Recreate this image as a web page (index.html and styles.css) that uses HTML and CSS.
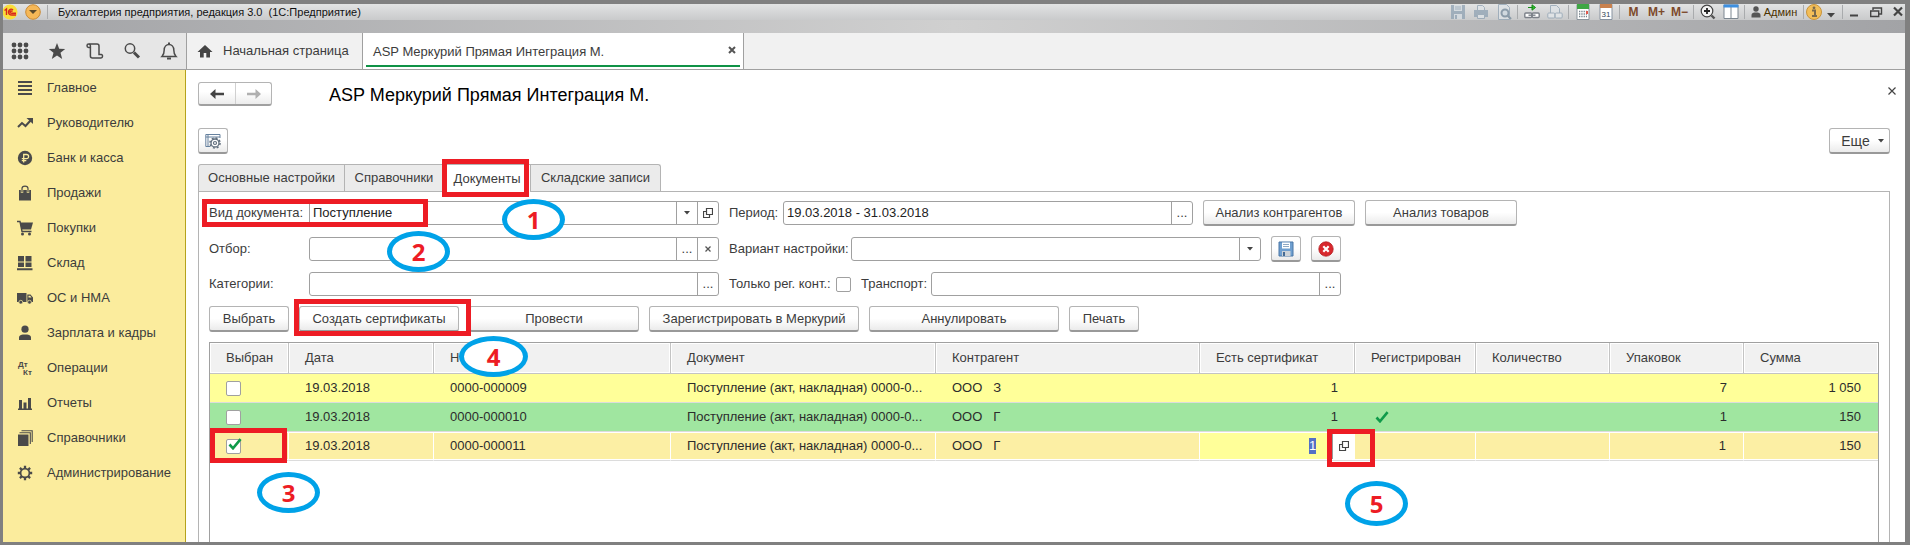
FILE: index.html
```html
<!DOCTYPE html>
<html lang="ru">
<head>
<meta charset="utf-8">
<title>Бухгалтерия предприятия, редакция 3.0 (1С:Предприятие)</title>
<link rel="stylesheet" href="styles.css">
</head>
<body>
<svg class="defs" width="0" height="0" aria-hidden="true">
  <symbol id="i-open" viewBox="0 0 10 10"><path d="M3.5 .5h6v6h-6zM3 3.5H.5v6h6V7" fill="none" stroke="#444" stroke-width="1.2"/></symbol>
  <symbol id="i-caret" viewBox="0 0 6 4"><path d="M0 0h6L3 3.5z" fill="#444"/></symbol>
  <symbol id="i-check" viewBox="0 0 14 12"><path d="M1.5 6.5 5 10.3 12.6 1.2" fill="none" stroke="#0f9a4a" stroke-width="2.6"/></symbol>
</svg>
<div class="frame">
  <header class="titlebar">
    <svg class="logo" viewBox="0 0 16 16"><circle cx="7" cy="8" r="7.5" fill="#f9de3a"/><path d="M1.5 6.5 3.5 5v6M10 6.2C8.500 4.200 5.500 5.200 5.500 8s2 3 3.500 3h4M9.500 7.500C8 6.500 7 7 7 8s.8 1.300 2 1.300h4" fill="none" stroke="#d9261c" stroke-width="1.4"/></svg>
    <button class="menu-btn" aria-label="Главное меню"><svg viewBox="0 0 16 16"><circle cx="8" cy="8" r="7.300" fill="#f6b857" stroke="#c98a35"/><path d="M4 6h8l-4 4z" fill="#5b4a2b"/></svg></button>
    <i class="sep sep-wide"></i>
    <span class="app-title">Бухгалтерия предприятия, редакция 3.0&nbsp; (1С:Предприятие)</span>
    <div class="tools">
      <button class="tool faded" aria-label="Сохранить"><svg viewBox="0 0 16 16"><path d="M1 1h14v14H1z" fill="#8fa2b3"/><path d="M4 1h8v6H4zM4 10h8v5H4z" fill="#d5dce2"/><path d="M5 3h6M5 5h6" stroke="#8fa2b3"/><path d="M5 11h2v4H5z" fill="#8fa2b3"/></svg></button>
      <button class="tool faded" aria-label="Печать"><svg viewBox="0 0 16 16"><path d="M1 6h14v7H1z" fill="#8fa2b3"/><path d="M4.500 6V1.500h5l2 2V6M4.500 10.500h7v4h-7z" fill="#dfe4e8" stroke="#8fa2b3"/></svg></button>
      <button class="tool faded" aria-label="Просмотр"><svg viewBox="0 0 16 16"><path d="M2.500.5h8l3 3v12h-11z" fill="#dfe4e8" stroke="#8fa2b3"/><circle cx="9" cy="9" r="3.500" fill="#cfdae2" stroke="#74899b" stroke-width="2"/><path d="m11.500 11.500 3.500 3.500" stroke="#74899b" stroke-width="2.200"/></svg></button>
      <i class="sep"></i>
      <button class="tool" aria-label="Получить ссылку"><svg viewBox="0 0 16 16"><path d="M4 3.500h5M8 .8l3.500 2.700L8 6.200z" fill="#2fc12f" stroke="#168a16"/><rect x=".8" y="9" width="7" height="4.500" rx="1" fill="#fff" stroke="#7b8088" stroke-width="1.400"/><rect x="8.200" y="9" width="7" height="4.500" rx="1" fill="#fff" stroke="#7b8088" stroke-width="1.400"/><path d="M4.500 11.200h7" stroke="#7b8088" stroke-width="1.400"/></svg></button>
      <button class="tool faded" aria-label="Перейти по ссылке"><svg viewBox="0 0 16 16"><path d="M3.500 9V1.500h6l3 3V9" fill="#dfe4e8" stroke="#8fa2b3"/><rect x=".8" y="9" width="7" height="5" rx="1" fill="#e5e9ec" stroke="#8fa2b3"/><rect x="8.200" y="9" width="7" height="5" rx="1" fill="#e5e9ec" stroke="#8fa2b3"/></svg></button>
      <i class="sep"></i>
      <button class="tool" aria-label="Калькулятор"><svg viewBox="0 0 16 16"><path d="M2 .5h12v15H2z" fill="#fff" stroke="#8a949c"/><path d="M2 0h12v5H2z" fill="#3fa744"/><path d="M4 7.500h8M4 10h8M4 12.500h8" stroke="#76828c" stroke-width="1.300" stroke-dasharray="1.300 1"/><path d="M11 7h2v3h-2z" fill="#e2574c"/></svg></button>
      <button class="tool" aria-label="Календарь"><svg viewBox="0 0 16 16"><path d="M2 .5h12v15H2z" fill="#fff" stroke="#8893a0"/><path d="M2 0h12v4H2z" fill="#c9814e"/><text x="8" y="12.500" text-anchor="middle" class="cal-num">31</text></svg></button>
      <i class="sep"></i>
      <button class="tool mem">M</button><button class="tool mem">M+</button><button class="tool mem">M−</button>
      <i class="sep"></i>
      <button class="tool" aria-label="Масштаб"><svg viewBox="0 0 16 16"><circle cx="7" cy="7" r="5.800" fill="#f4f4f4" stroke="#444" stroke-width="1.200"/><path d="M4 7h6M7 4v6" stroke="#222" stroke-width="1.800"/><path d="m11.500 11.500 3 3" stroke="#555" stroke-width="2.400"/></svg></button>
      <button class="tool" aria-label="Панели"><svg viewBox="0 0 16 16"><path d="M1 1h14v13.500H1z" fill="#fff" stroke="#7c8791"/><path d="M.5.5h15v3H.5z" fill="#3d8fe0"/><path d="M8 3v11" stroke="#7c8791"/></svg></button>
      <i class="sep"></i>
      <button class="user"><svg viewBox="0 0 10 12"><circle cx="5" cy="3" r="2.700" fill="#555"/><path d="M.5 11.500V9c0-2 2-2.500 4.500-2.500S9.500 7 9.500 9v2.500z" fill="#555"/></svg>Админ</button>
      <i class="sep"></i>
      <button class="info" aria-label="Справка"><svg viewBox="0 0 16 16"><circle cx="8" cy="8" r="7.500" fill="#f3be58" stroke="#c8933a"/><path d="M6 6.500h3v5M6 12h5" fill="none" stroke="#7a6a4c" stroke-width="2"/><circle cx="8" cy="3.800" r="1.400" fill="#7a6a4c"/></svg></button>
      <button class="more" aria-label="Еще"><svg viewBox="0 0 8 5"><path d="M0 0h8L4 4.500z" fill="#444"/></svg></button>
      <i class="sep"></i>
      <div class="win">
        <button aria-label="Свернуть"><svg viewBox="0 0 14 14"><path d="M3 10.500h8" stroke="#444" stroke-width="2"/></svg></button>
        <button aria-label="Восстановить"><svg viewBox="0 0 14 14"><path d="M4 5V3h8.500v6H10" fill="none" stroke="#444" stroke-width="1.400"/><path d="M1.700 6h8v5.500h-8z" fill="none" stroke="#444" stroke-width="1.400"/></svg></button>
        <button aria-label="Закрыть"><svg viewBox="0 0 14 14"><path d="m3 2.500 8 8M11 2.500l-8 8" stroke="#444" stroke-width="2.200"/></svg></button>
      </div>
    </div>
  </header>

  <div class="tabbar">
    <div class="quick">
      <button aria-label="Меню функций"><svg viewBox="0 0 18 18" fill="#4a4a4a"><circle cx="3" cy="3" r="2.400"/><circle cx="9" cy="3" r="2.400"/><circle cx="15" cy="3" r="2.400"/><circle cx="3" cy="9" r="2.400"/><circle cx="9" cy="9" r="2.400"/><circle cx="15" cy="9" r="2.400"/><circle cx="3" cy="15" r="2.400"/><circle cx="9" cy="15" r="2.400"/><circle cx="15" cy="15" r="2.400"/></svg></button>
      <button aria-label="Избранное"><svg viewBox="0 0 18 18"><path d="m9 1 2.200 5.800 6 .3-4.700 3.700 1.700 6.200L9 13.500 3.800 17l1.700-6.200L.8 7.100l6-.3z" fill="#4a4a4a"/></svg></button>
      <button aria-label="История"><svg viewBox="0 0 18 18"><path d="M4.500 5.500H2.700a1.700 1.700 0 1 1 1.700-1.700V14c0 1 .8 2 2 2H15c2 0 2-3.500.3-3.500H13V4c0-1.200-.8-2-2-2H3" fill="none" stroke="#4a4a4a" stroke-width="1.500"/></svg></button>
      <button aria-label="Поиск"><svg viewBox="0 0 18 18"><circle cx="7" cy="6.500" r="4.700" fill="none" stroke="#4a4a4a" stroke-width="1.500"/><path d="m11 10.500 5 5" stroke="#4a4a4a" stroke-width="3"/></svg></button>
      <button aria-label="Уведомления"><svg viewBox="0 0 18 18"><path d="M2 14.500c1.500-1.500 2.200-3 2.200-6.500S6.500 2.500 9 2.500 13.800 4.500 13.800 8s.7 5 2.200 6.500z" fill="none" stroke="#4a4a4a" stroke-width="1.500"/><path d="M9 .5v2M7 16.500h4" stroke="#4a4a4a" stroke-width="2"/></svg></button>
    </div>
    <nav class="tabs">
      <a class="home" href="#"><svg viewBox="0 0 16 14"><path d="M8 1 .5 8H3v5.500h3.700V9h2.600v4.500H13V8h2.500z" fill="#444"/></svg>Начальная страница</a>
      <div class="open-tab"><a href="#">ASP Меркурий Прямая Интеграция М.</a><button aria-label="Закрыть вкладку"><svg viewBox="0 0 8 8"><path d="m1 1 6 6M7 1 1 7" stroke="#555" stroke-width="2"/></svg></button></div>
    </nav>
  </div>

  <div class="body">
    <nav class="side">
      <a href="#"><svg viewBox="0 0 16 16"><path d="M1 2h14M1 6h14M1 10h14M1 14h14" stroke="#4a4a4a" stroke-width="2"/></svg>Главное</a>
      <a href="#"><svg viewBox="0 0 16 16"><path d="m1 12 4-4 3.500 3L14 5" fill="none" stroke="#4a4a4a" stroke-width="2"/><path d="M9.500 3H16v6z" fill="#4a4a4a"/></svg>Руководителю</a>
      <a href="#"><svg viewBox="0 0 16 16"><circle cx="8" cy="8" r="7.200" fill="#4a4a4a"/><path d="M6.700 12.500V4.500h2.800a2 2 0 0 1 0 4.200H4.800M4.800 10.700h4.500" fill="none" stroke="#fbec9d" stroke-width="1.300"/></svg>Банк и касса</a>
      <a href="#"><svg viewBox="0 0 16 16"><path d="M2 5h12v10.500H2z" fill="#4a4a4a"/><path d="M5 8V3.500C5 0 11 0 11 3.500V8" fill="none" stroke="#fbec9d" stroke-width="2.400"/><path d="M5 7.500v-4C5 .2 11 .2 11 3.500v4" fill="none" stroke="#4a4a4a" stroke-width="1.200"/></svg>Продажи</a>
      <a href="#"><svg viewBox="0 0 16 16"><path d="M3 2.500h13l-2 7H4.500z" fill="#4a4a4a"/><path d="M0 1.500h3l2 10h9.500" fill="none" stroke="#4a4a4a" stroke-width="1.400"/><circle cx="5.500" cy="14" r="1.500" fill="#4a4a4a"/><circle cx="12.500" cy="14" r="1.500" fill="#4a4a4a"/></svg>Покупки</a>
      <a href="#"><svg viewBox="0 0 16 16"><path d="M1 1h6v5.500H1zM8.500 1h6v5.500h-6zM1 7.500h6V12H1zM8.500 7.500h6V12h-6zM0 13.200h15.500v2H0z" fill="#4a4a4a"/></svg>Склад</a>
      <a href="#"><svg viewBox="0 0 16 16"><path d="M0 3h9.500v9H0zM10.300 4.500h3.200L16 7.500V12h-5.700z" fill="#4a4a4a"/><path d="M11.500 5.700h1.700l1.300 1.800h-3z" fill="#fbec9d"/><circle cx="3.800" cy="12.200" r="1.900" fill="#4a4a4a" stroke="#fbec9d" stroke-width=".7"/><circle cx="12.500" cy="12.200" r="1.900" fill="#4a4a4a" stroke="#fbec9d" stroke-width=".7"/></svg>ОС и НМА</a>
      <a href="#"><svg viewBox="0 0 16 16"><circle cx="8" cy="4.200" r="3.600" fill="#4a4a4a"/><path d="M2 15v-2.500C2 10 5 9.500 8 9.500s6 .5 6 3V15z" fill="#4a4a4a"/></svg>Зарплата и кадры</a>
      <a href="#"><svg viewBox="0 0 16 16" class="dtkt"><text x="1" y="7">Дт</text><text x="6" y="15">Кт</text></svg>Операции</a>
      <a href="#"><svg viewBox="0 0 16 16"><path d="M2 5h3v9H2zM6.500 7.500h3V14h-3zM11 3h3v11h-3zM1 13.500h14V15H1z" fill="#4a4a4a"/></svg>Отчеты</a>
      <a href="#"><svg viewBox="0 0 16 16"><path d="M1 4.500h10.500V16H1z" fill="#4a4a4a"/><path d="M2.500 2.700h10.800V14M4.500.8h10.700V12" fill="none" stroke="#4a4a4a" stroke-width="1.100"/></svg>Справочники</a>
      <a href="#"><svg viewBox="0 0 16 16"><circle cx="8" cy="8" r="4.400" fill="none" stroke="#4a4a4a" stroke-width="1.700"/><path d="M8 .8v2.600M8 12.600v2.600M.8 8h2.600M12.600 8h2.600M2.900 2.900l1.800 1.800M11.300 11.300l1.800 1.800M2.900 13.100l1.800-1.800M11.300 4.700l1.800-1.800" stroke="#4a4a4a" stroke-width="2.300"/></svg>Администрирование</a>
    </nav>

    <main class="main">
      <div class="head">
        <div class="nav-pair">
          <button aria-label="Назад"><svg viewBox="0 0 14 12"><path d="M0 6l5.500-5v3.700H14v2.600H5.500V11z" fill="#444"/></svg></button>
          <button aria-label="Вперед"><svg viewBox="0 0 14 12"><path d="M14 6 8.500 1v3.700H0v2.600h8.500V11z" fill="#b0b0b0"/></svg></button>
        </div>
        <h1>ASP Меркурий Прямая Интеграция М.</h1>
        <button class="close" aria-label="Закрыть"><svg viewBox="0 0 8 8"><path d="m.5.5 7 7M7.500.5l-7 7" stroke="#444" stroke-width="1.200"/></svg></button>
      </div>
      <div class="cmd">
        <button class="btn icon-btn" aria-label="Настройки"><svg viewBox="0 0 16 16"><path d="M15 5V1.500H.8v12H5M.8 4H15M3 1.500v12" fill="none" stroke="#66819e"/><circle cx="10" cy="10" r="4" fill="#fff" stroke="#5f6d7c" stroke-width="1.300"/><circle cx="10" cy="10" r="5.100" fill="none" stroke="#5f6d7c" stroke-width="1.400" stroke-dasharray="2 2"/><circle cx="10" cy="10" r="1.500" fill="none" stroke="#5f6d7c" stroke-width="1.200"/></svg></button>
        <button class="btn more-btn">Еще<svg class="caret"><use href="#i-caret"/></svg></button>
      </div>
      <div class="page-tabs" role="tablist">
        <button role="tab" class="t1">Основные настройки</button>
        <button role="tab" class="t2">Справочники</button>
        <button role="tab" class="t3" aria-selected="true">Документы</button>
        <button role="tab" class="t4">Складские записи</button>
      </div>
      <section class="panel">
        <div class="row">
          <label class="lab" for="kind">Вид документа:</label>
          <div class="field"><select id="kind"><option>Поступление</option></select><span class="seg"><svg class="caret"><use href="#i-caret"/></svg></span><button class="seg" aria-label="Открыть"><svg class="open"><use href="#i-open"/></svg></button></div>
          <label class="lab-period" for="period">Период:</label>
          <div class="field"><input id="period" value="19.03.2018 - 31.03.2018"><button class="seg">...</button></div>
          <button class="btn w152">Анализ контрагентов</button>
          <button class="btn w152">Анализ товаров</button>
        </div>
        <div class="row">
          <label class="lab" for="filter">Отбор:</label>
          <div class="field"><input id="filter"><button class="seg">...</button><button class="seg" aria-label="Очистить"><svg class="clear" viewBox="0 0 6 6"><path d="m.5.5 5 5M5.500.5l-5 5" stroke="#555" stroke-width="1.300"/></svg></button></div>
          <label class="lab-variant" for="variant">Вариант настройки:</label>
          <div class="field"><select id="variant"><option></option></select><span class="seg"><svg class="caret"><use href="#i-caret"/></svg></span></div>
          <button class="btn icon-btn" aria-label="Сохранить настройку"><svg viewBox="0 0 16 16"><path d="M1 1h14v14H1z" fill="#6f9fd0" stroke="#4a76a6"/><path d="M4 1.500h8v6H4z" fill="#fff"/><path d="M5 3.500h6M5 5.500h6" stroke="#8fa9c4"/><path d="M4 10h8.500v5H4z" fill="#ccd2d8"/><path d="M5 11h2v4H5z" fill="#446a94"/></svg></button>
          <button class="btn icon-btn" aria-label="Удалить настройку"><svg viewBox="0 0 16 16"><circle cx="8" cy="8" r="7.200" fill="#d8282d" stroke="#b41e22" stroke-width=".8"/><path d="m5.300 5.300 5.400 5.400M10.700 5.300l-5.400 5.400" stroke="#fff" stroke-width="2.200"/></svg></button>
        </div>
        <div class="row row-low">
          <label class="lab" for="cats">Категории:</label>
          <div class="field"><input id="cats"><button class="seg">...</button></div>
          <label class="lab-reg" for="reg">Только рег. конт.:</label>
          <input type="checkbox" class="chk" id="reg">
          <label class="lab-tr" for="transport">Транспорт:</label>
          <div class="field"><input id="transport"><button class="seg">...</button></div>
        </div>
        <div class="row">
          <button class="btn w80">Выбрать</button>
          <button class="btn w160">Создать сертификаты</button>
          <button class="btn w170">Провести</button>
          <button class="btn w210">Зарегистрировать в Меркурий</button>
          <button class="btn w190">Аннулировать</button>
          <button class="btn w70">Печать</button>
        </div>
        <div class="grid">
          <table>
            <colgroup><col class="c-sel"><col class="c-date"><col class="c-num"><col class="c-doc"><col><col class="c-cert"><col class="c-reg"><col class="c-qty"><col class="c-qty"><col class="c-sum"></colgroup>
            <thead><tr><th>Выбран</th><th>Дата</th><th>Номер</th><th>Документ</th><th>Контрагент</th><th>Есть сертификат</th><th>Регистрирован</th><th>Количество</th><th>Упаковок</th><th>Сумма</th></tr></thead>
            <tbody>
              <tr class="yellow"><td><input type="checkbox" class="chk" aria-label="Выбран"></td><td>19.03.2018</td><td>0000-000009</td><td>Поступление (акт, накладная) 0000-0...</td><td>ООО&nbsp;&nbsp; З</td><td class="num">1</td><td></td><td></td><td class="num">7</td><td class="num">1 050</td></tr>
              <tr class="green"><td><input type="checkbox" class="chk" aria-label="Выбран"></td><td>19.03.2018</td><td>0000-000010</td><td>Поступление (акт, накладная) 0000-0...</td><td>ООО&nbsp;&nbsp; Г</td><td class="num">1</td><td><svg class="tick"><use href="#i-check"/></svg></td><td></td><td class="num">1</td><td class="num">150</td></tr>
              <tr class="current"><td><span class="chk-wrap"><input type="checkbox" class="chk" checked aria-label="Выбран"><svg class="tick over"><use href="#i-check"/></svg></span></td><td>19.03.2018</td><td>0000-000011</td><td>Поступление (акт, накладная) 0000-0...</td><td>ООО&nbsp;&nbsp; Г</td><td class="edit"><div class="editor"><input value="1" aria-label="Есть сертификат"><button aria-label="Открыть"><svg class="open"><use href="#i-open"/></svg></button></div></td><td></td><td></td><td class="num">1</td><td class="num">150</td></tr>
            </tbody>
          </table>
        </div>
      </section>
    </main>
  </div>

  <div class="mark box b1"></div><div class="mark box b2"></div><div class="mark box b3"></div><div class="mark box b4"></div><div class="mark box b5"></div>
  <div class="mark step s1">1</div><div class="mark step s2">2</div><div class="mark step s3">3</div><div class="mark step s4">4</div><div class="mark step s5">5</div>
</div>
</body>
</html>
```
FILE: styles.css
```css
* { box-sizing: border-box; }
html, body { height: 100%; }
body { margin: 0; background: #808080; font: 13px/16px "Liberation Sans", Arial, sans-serif; color: #3c3c3c; overflow: hidden; }
button, input, select { font: inherit; color: inherit; margin: 0; }
button { border: 0; padding: 0; background: none; display: flex; align-items: center; justify-content: center; white-space: nowrap; }
a { color: inherit; text-decoration: none; white-space: nowrap; }
label { white-space: nowrap; }
svg { display: block; flex: none; }
.defs { position: absolute; }

.frame { position: relative; height: 100vh; border: solid #808080; border-width: 4px 5px 3px 3px; background: #fff; display: flex; flex-direction: column; }

/* Title bar */
.titlebar { flex: none; height: 29px; padding-bottom: 13px; display: flex; align-items: center; background: linear-gradient(#e2e3e3, #c9cacb) top / 100% 16px no-repeat, linear-gradient(90deg, #a2a3a6, #d0d0d0 50%, #a2a3a6); color: #111; font-size: 11px; overflow: hidden; }
.logo, .menu-btn svg, .tool svg, .info svg { width: 16px; height: 16px; }
.menu-btn { margin-left: 6px; }
.sep { flex: none; width: 1px; height: 14px; margin: 0 2px; background: #a9abad; }
.sep-wide { margin: 0 10px 0 6px; }
.tools { margin-left: auto; display: flex; align-items: center; height: 16px; }
.tool { width: 23px; height: 16px; }
.faded { opacity: .75; }
.mem { color: #7d4a2c; font-weight: bold; font-size: 12px; }
.cal-num { font-size: 8px; fill: #345; }
.user { width: 54px; gap: 3px; color: #4a3300; }
.user svg { width: 10px; height: 12px; }
.more { width: 18px; padding-top: 6px; }
.more svg { width: 8px; height: 5px; }
.win { display: flex; gap: 8px; margin-left: 2px; }
.win svg { width: 14px; height: 14px; }

/* Open windows bar */
.tabbar { flex: none; height: 37px; display: flex; background: #f1f1f1; border-bottom: 1px solid #a0a0a0; }
.quick { width: 184px; padding: 0 8px; background: #e6e6e6; border-right: 1px solid #a0a0a0; display: flex; align-items: center; justify-content: space-between; }
.quick svg { width: 18px; height: 18px; }
.tabs { display: flex; }
.home { width: 176px; padding-left: 10px; display: flex; align-items: center; gap: 10px; border-right: 1px solid #a0a0a0; }
.home svg { width: 16px; height: 14px; }
.open-tab { width: 381px; padding: 0 3px; background: #fff; border-right: 1px solid #a0a0a0; display: flex; }
.open-tab a { flex: 1; padding-left: 7px; line-height: 37px; }
.open-tab a, .open-tab button { height: 34px; border-bottom: 2px solid #0f9246; }
.open-tab button { padding: 2px 4px 0 0; }
.open-tab button svg { width: 8px; height: 8px; }

/* Sections */
.body { flex: 1; min-height: 0; display: flex; }
.side { flex: none; width: 183px; background: #fbec9d; border-right: 1px solid #b5a21c; }
.side a { height: 35px; padding-left: 14px; display: flex; align-items: center; gap: 14px; }
.side svg { width: 16px; height: 16px; }
.dtkt { font-size: 8px; font-weight: bold; fill: #4a4a4a; }

.main { flex: 1; min-width: 0; padding: 12px 15px 0 12px; display: flex; flex-direction: column; }
.head { height: 24px; display: flex; align-items: center; }
.nav-pair { display: flex; border: 1px solid #b4b4b4; border-bottom: 2px solid #a0a0a0; border-radius: 3px; background: linear-gradient(#fff 40%, #ececec); }
.nav-pair button { width: 36px; height: 21px; }
.nav-pair button + button { border-left: 1px solid #d0d0d0; }
.nav-pair svg { width: 14px; height: 12px; }
h1 { margin: 0 0 0 57px; padding-top: 2px; font-size: 18px; line-height: 24px; font-weight: normal; color: #000; white-space: nowrap; }
.close { margin-left: auto; height: 18px; align-self: flex-start; width: 8px; margin-right: -6px; }
.close svg { width: 8px; height: 8px; }
.cmd { margin: 22px 0 10px; display: flex; justify-content: space-between; }
.btn { flex: none; height: 26px; border: 1px solid #b4b4b4; border-bottom: 2px solid #999; border-radius: 3px; background: linear-gradient(#fff 50%, #ebebeb); }
.icon-btn { width: 30px; }
.icon-btn svg { width: 16px; height: 16px; }
.more-btn { width: 61px; gap: 8px; font-size: 14px; padding-left: 6px; }
.caret { width: 6px; height: 4px; }
.open { width: 10px; height: 10px; }
.clear { width: 6px; height: 6px; }

.page-tabs { display: flex; height: 27px; }
.page-tabs button { height: 27px; background: #ebebeb; border: 1px solid #b4b4b4; border-bottom: 0; border-left-width: 0; }
.page-tabs .t1 { width: 147px; border-left-width: 1px; border-top-left-radius: 3px; }
.page-tabs .t2 { width: 99px; }
.page-tabs .t3 { width: 87px; height: 28px; background: #fff; position: relative; }
.page-tabs .t4 { width: 130px; border-top-right-radius: 3px; }

.panel { flex: 1; min-height: 0; border: 1px solid #b4b4b4; border-bottom: 0; padding: 8px 10px 0; display: flex; flex-direction: column; gap: 10px; }
.row { flex: none; display: flex; align-items: center; gap: 10px; height: 26px; }
.row-low { height: 24px; }
.lab { width: 90px; }
.lab-period { width: 44px; }
.lab-variant { width: 112px; }
.lab-reg { width: 97px; }
.lab-tr { width: 60px; }
.field { flex: none; width: 410px; height: 24px; border: 1px solid #a0a0a0; border-radius: 3px; background: #fff; display: flex; }
.field input, .field select { flex: 1; min-width: 0; border: 0; padding: 0 0 0 3px; background: none; appearance: none; color: #222; outline: 0; }
.seg { flex: none; width: 21px; border-left: 1px solid #a0a0a0; display: flex; align-items: center; justify-content: center; }
.chk { appearance: none; flex: none; width: 15px; height: 15px; border: 1px solid #a0a0a0; border-radius: 2px; background: #fff; }
.w70 { width: 70px; } .w80 { width: 80px; } .w152 { width: 152px; } .w160 { width: 160px; }
.w170 { width: 170px; } .w190 { width: 190px; } .w210 { width: 210px; }

/* Documents list */
.grid { flex: 1; min-height: 0; border: 1px solid #a0a0a0; border-bottom: 0; overflow: hidden; }
table { width: 100%; table-layout: fixed; border-collapse: separate; border-spacing: 0; }
.c-sel { width: 79px; } .c-date { width: 145px; } .c-num { width: 237px; } .c-doc { width: 265px; }
.c-cert { width: 155px; } .c-reg { width: 121px; } .c-qty { width: 134px; } .c-sum { width: 134px; }
th { height: 31px; padding: 0 0 0 16px; text-align: left; font-weight: normal; background: #f1f1f1; border: 1px solid #c4c4c4; border-width: 0 1px 1px 0; box-shadow: inset 0 0 0 1px #fff; white-space: nowrap; }
td { height: 29px; padding: 0 0 0 16px; border-bottom: 1px solid #dcdcdc; white-space: nowrap; color: #2c2c2c; }
th:last-child { border-right: 0; }
.num { padding: 0 17px 0 0; text-align: right; }
td .chk, .chk-wrap, .chk-wrap .chk { display: block; }
.yellow td { background: #ffff99; }
.green td { background: #a0e6a0; }
.current td { background: #fcefa4; box-shadow: inset 0 1px #fff, inset 0 -1px #fff; border-right: 1px solid #fff; }
.current td:last-child { border-right: 0; }
.current td.edit { background: #ffff99; padding: 1px 0; border-right: 0; }
.editor { display: flex; justify-content: flex-end; align-items: center; height: 26px; }
.editor input { width: 7px; height: 16px; padding: 0; border: 0; background: #5470c6; color: #fff; }
.editor button { width: 23px; height: 26px; margin-left: 16px; background: #fff; border-left: 1px solid #999; }
.tick { width: 14px; height: 12px; margin-left: 4px; }
.chk-wrap { position: relative; width: 16px; }
.over { position: absolute; left: 2px; top: -1px; margin: 0; }

/* Numbered callouts lying over the window */
.mark { position: absolute; pointer-events: none; }
.box { border: 5px solid #ed1c24; }
.b1 { left: 439px; top: 155px; width: 87px; height: 38px; }
.b2 { left: 199px; top: 195px; width: 226px; height: 28px; }
.b3 { left: 207px; top: 424px; width: 77px; height: 35px; }
.b4 { left: 291px; top: 295px; width: 177px; height: 37px; }
.b5 { left: 1324px; top: 425px; width: 48px; height: 38px; }
.step { width: 63px; height: 41px; border: 5px solid #00a2e8; border-radius: 50%; background: #fff; color: #ed1c24; font: bold 24px/32px "Open Sans", sans-serif; display: flex; align-items: center; justify-content: center; }
.s1 { left: 499px; top: 195px; }
.s2 { left: 384px; top: 227px; }
.s3 { left: 254px; top: 468px; }
.s4 { left: 456px; top: 332px; width: 69px; }
.s5 { left: 1342px; top: 477px; height: 45px; }
```
